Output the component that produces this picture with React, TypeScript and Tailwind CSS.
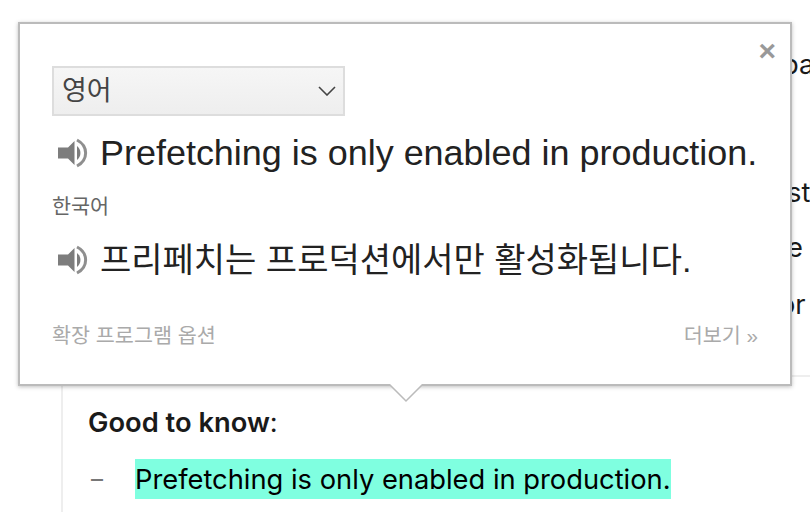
import React from "react";

function Speaker() {
  return (
    <svg width="31" height="30" viewBox="0 0 31 30" className="shrink-0" aria-hidden="true">
      <path d="M0 9.5h10L16.5 3v24L10 20.5H0z" fill="#7d7d7d" />
      <path d="M19 8c4.6 3.8 4.6 10.2 0 14z" fill="#7d7d7d" />
      <path d="M19 2c11.5 6 11.5 20 0 26" fill="none" stroke="#8f8f8f" strokeWidth="3" />
    </svg>
  );
}

const korean = "font-['Liberation_Sans','Noto_Sans_CJK_KR',sans-serif]";

export default function App() {
  return (
    <div className="relative h-[512px] w-[810px] overflow-hidden bg-white font-['Inter',sans-serif] text-[#1a1a1a]">
      {/* page behind the popup */}
      <div className="ml-[62px] h-[377px] border-b-2 border-[#eeeeee] pt-[45px] pl-[715px] text-[27.3px] leading-[40px]">
        <div className="h-[128px] whitespace-nowrap pl-[5px]">pa</div>
        <div className="h-[55px] whitespace-nowrap pl-[10px]">st</div>
        <div className="h-[57px] whitespace-nowrap pl-[10px]">e</div>
        <div className="whitespace-nowrap pl-[2px]">or</div>
      </div>
      <div className="ml-[61px] h-[135px] border-l-2 border-[#eeeeee] pl-[25px] pt-[26px]">
        <p className="text-[27.3px] leading-[40px]">
          <strong className="font-semibold">Good to know</strong>:
        </p>
        <div className="mt-[16px] flex items-center">
          <span className="w-[47px] pl-[3px] text-[#777777] text-[24px] leading-[40px]">–</span>
          <span className="h-[40px] bg-[#7fffe0] pt-[1px] text-[27.3px] leading-[40px] text-black whitespace-nowrap">
            Prefetching is only enabled in production.
          </span>
        </div>
      </div>

      {/* translation popup */}
      <div className={`absolute left-[18px] top-[22px] flex h-[364px] w-[774px] flex-col border-2 border-[#bbbbbb] bg-white pl-[32px] pr-[32px] text-[#222222] shadow-[0_1px_4px_rgba(0,0,0,0.25)] ${korean}`}>
        <span className="absolute right-[14px] top-[12px] text-[30px] leading-[30px] font-bold text-[#999999]">×</span>
        <div className="mt-[42px] flex h-[50px] w-[293px] items-center justify-between border-2 border-[#dddddd] bg-gradient-to-b from-[#f6f6f6] to-[#eeeeee] pl-[8px] pr-[7px] text-[27px] text-[#444444]">
          <span>영어</span>
          <svg width="18" height="10" viewBox="0 0 18 10" aria-hidden="true">
            <path d="M1 1l8 8 8-8" fill="none" stroke="#444444" strokeWidth="1.6" />
          </svg>
        </div>
        <div className="mt-[14px] flex h-[46px] items-center gap-[11px] pl-[6px] text-[35.95px] whitespace-nowrap">
          <Speaker />
          <span>Prefetching is only enabled in production.</span>
        </div>
        <div className="mt-[17px] text-[20.7px] leading-[28px] text-[#666666]">한국어</div>
        <div className="mt-[16px] flex h-[46px] items-center gap-[11px] pl-[6px] text-[34px] whitespace-nowrap">
          <Speaker />
          <span>프리페치는 프로덕션에서만 활성화됩니다.</span>
        </div>
        <div className="mt-[39px] flex items-center justify-between text-[20.7px] leading-[28px] text-[#aaaaaa]">
          <span>확장 프로그램 옵션</span>
          <span>더보기 »</span>
        </div>
      </div>
      {/* popup pointer */}
      <svg width="36" height="19" viewBox="0 0 36 19" className="absolute left-[388px] top-[384px]" aria-hidden="true">
        <path d="M1 0l17 17L35 0" fill="white" stroke="#bbbbbb" strokeWidth="1.5" />
      </svg>
    </div>
  );
}
